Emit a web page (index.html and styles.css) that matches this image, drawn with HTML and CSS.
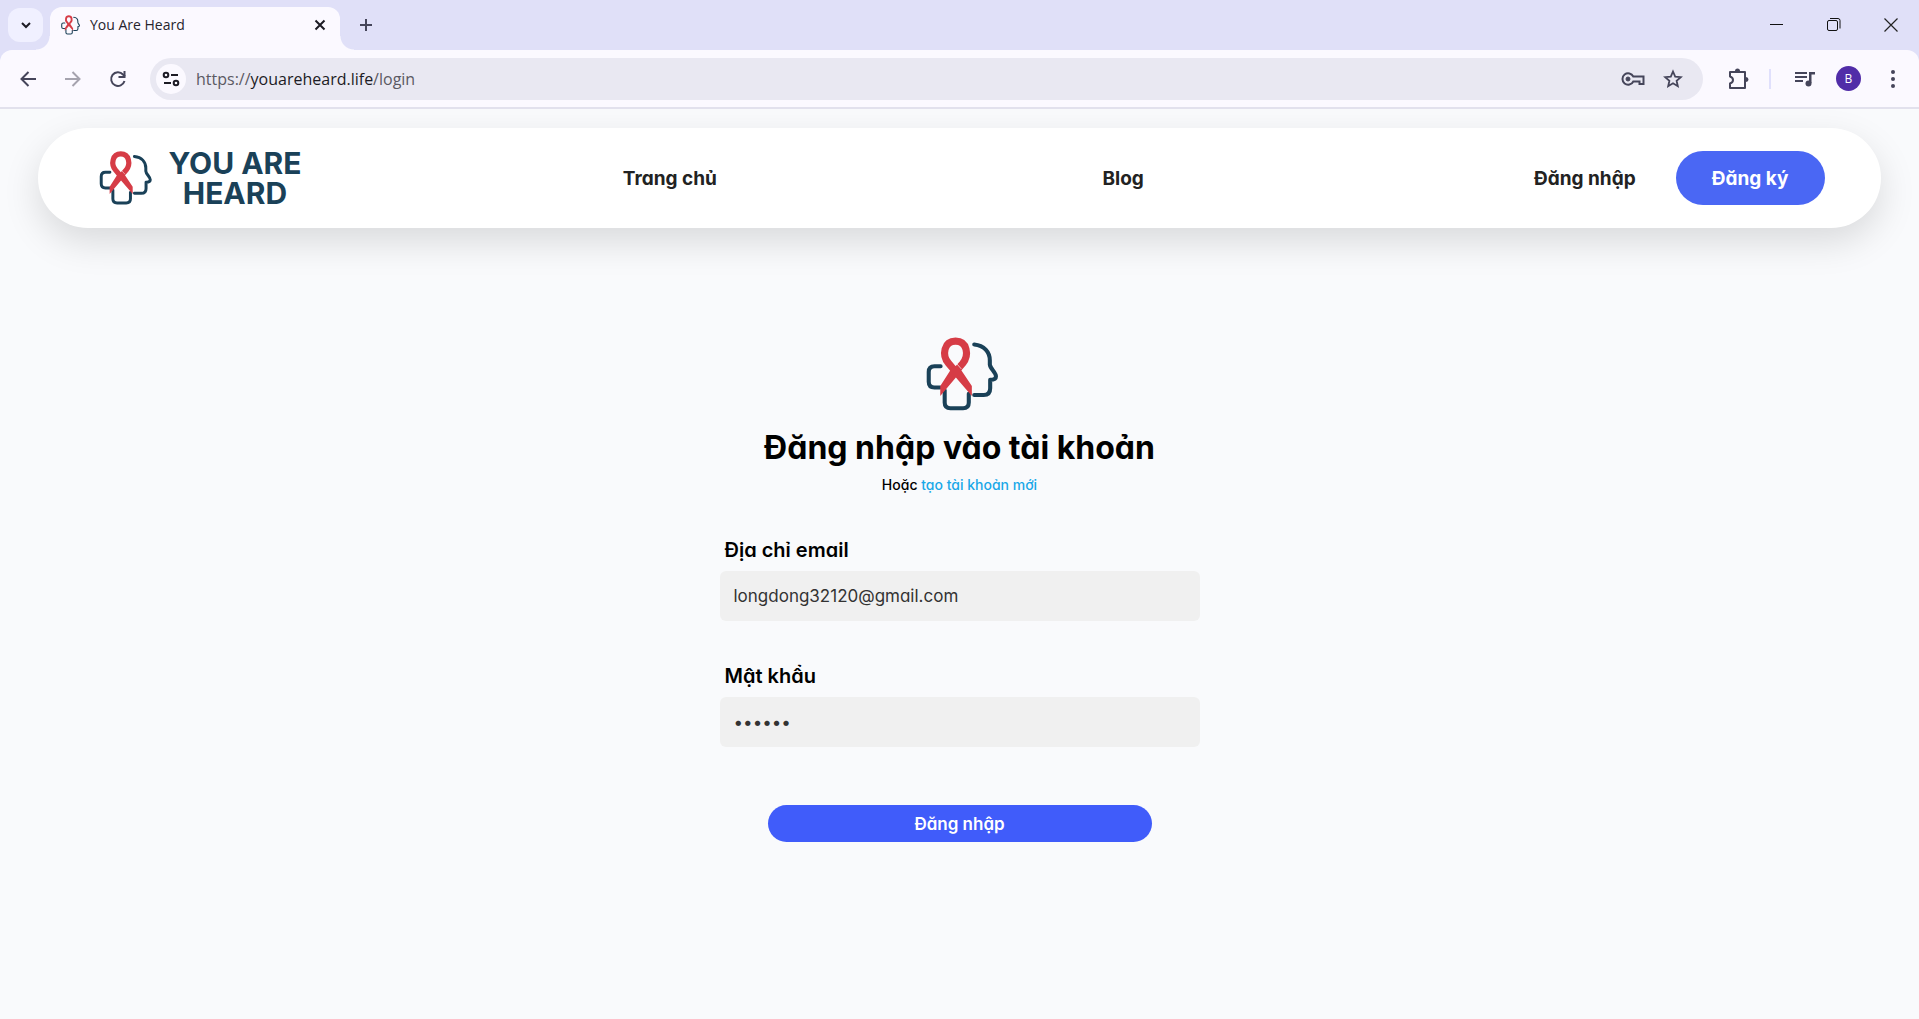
FILE: index.html
```html
<!DOCTYPE html>
<html lang="vi">
<head>
<meta charset="utf-8">
<meta name="viewport" content="width=device-width, initial-scale=1">
<title>You Are Heard</title>
<link rel="stylesheet" href="styles.css">
</head>
<body>
<svg class="defs" aria-hidden="true">
  <symbol id="brand" viewBox="78 55 212 218">
    <g fill="none" stroke="#1a4158" stroke-width="12" stroke-linecap="round" stroke-linejoin="round">
      <path d="M220 77C249 80 266 99 266 124V136C267 149 284 159 284 171C284 179 277 181 267 181V206C267 219 261 226 248 226H220"/>
      <path d="M121 141H103Q86 141 86 158V187Q86 204 103 204H120"/>
      <path d="M133 212V248Q133 265 150 265H187Q204 265 204 248V222"/>
    </g>
    <path d="M186 133C206 108 199 67 165 67C131 67 124 108 144 132L165 157L186 133" fill="none" stroke="#d63c46" stroke-width="21"/>
    <path d="M154 146L120 199V229L166 174L213 229V199L176 144Z" fill="#d63c46"/>
    <path class="brand-gap" d="M167 132L182 149" fill="none" stroke-width="2"/>
  </symbol>
</svg>

<div class="browser">
  <div class="tabstrip">
    <button class="tab-search" aria-label="Search tabs"><svg width="20" height="20" viewBox="0 0 20 20"><path d="M6 8l4 4 4-4" fill="none" stroke="#1c1b24" stroke-width="2"/></svg></button>
    <div class="tab">
      <svg class="favicon"><use href="#brand"/></svg>
      <span class="tab-title">You Are Heard</span>
      <button class="icon-btn" aria-label="Close tab"><svg width="12" height="12" viewBox="0 0 12 12"><path d="M1.500 1.500l9 9M10.500 1.500l-9 9" stroke="#1c1b24" stroke-width="2"/></svg></button>
    </div>
    <button class="icon-btn new-tab" aria-label="New tab"><svg width="14" height="14" viewBox="0 0 14 14"><path d="M7 1v12M1 7h12" stroke="#45455a" stroke-width="2"/></svg></button>
    <div class="window-controls">
      <button class="icon-btn" aria-label="Minimize"><svg width="14" height="14" viewBox="0 0 14 14"><path d="M0 6.500h13" stroke="#111"/></svg></button>
      <button class="icon-btn" aria-label="Restore"><svg width="14" height="14" viewBox="0 0 14 14" fill="none" stroke="#111"><rect x=".5" y="2.500" width="10" height="10" rx="1.500"/><path d="M3 .5h8q2 0 2 2v8"/></svg></button>
      <button class="icon-btn" aria-label="Close window"><svg width="14" height="14" viewBox="0 0 14 14"><path d="M.5 .5l13 13M13.500 .5l-13 13" stroke="#222" stroke-width="1.200"/></svg></button>
    </div>
  </div>
  <div class="toolbar">
    <button class="icon-btn" aria-label="Back"><svg width="18" height="18" viewBox="0 0 18 18" fill="none" stroke="#45455a" stroke-width="2"><path d="M17 9H3M9.500 2L2.500 9l7 7"/></svg></button>
    <button class="icon-btn" aria-label="Forward"><svg width="18" height="18" viewBox="0 0 18 18" fill="none" stroke="#a5a3ae" stroke-width="2"><path d="M1 9h14M8.500 2l7 7-7 7"/></svg></button>
    <button class="icon-btn" aria-label="Reload"><svg width="18" height="18" viewBox="0 0 18 18"><path d="M15.500 11A6.800 6.800 0 1 1 14 4.500L16 6.500" fill="none" stroke="#45455a" stroke-width="2"/><path d="M16.500 1v7h-7v-2h5V1z" fill="#45455a"/></svg></button>
    <div class="omnibox">
      <button class="site-info" aria-label="Site information"><svg width="18" height="16" viewBox="0 0 18 16" fill="none" stroke="#1c1b24" stroke-width="2"><circle cx="4" cy="4" r="2.300"/><path d="M9 4h7M2 12h7"/><circle cx="14" cy="12" r="2.300"/></svg></button>
      <div class="url" role="textbox" contenteditable="true" spellcheck="false" aria-label="Address"><span>https://</span><span class="url-host">youareheard.life</span><span>/login</span></div>
      <button class="icon-btn" aria-label="Passwords"><svg width="24" height="16" viewBox="0 0 24 16" fill="none" stroke="#45455a" stroke-width="2"><path d="M12.300 5.500H22.500V13H18.500V10.500H12.300A5.700 5.700 0 1 1 12.300 5.500Z"/><circle cx="7" cy="8" r="2" fill="#45455a" stroke-width="1"/></svg></button>
      <button class="icon-btn" aria-label="Bookmark"><svg width="20" height="20" viewBox="0 0 20 20"><path d="M10 2.500l2.200 5.100 5.600.5-4.200 3.700 1.200 5.400L10 14.300l-4.800 2.900 1.200-5.400L2.200 8.100l5.600-.5z" fill="none" stroke="#45455a" stroke-width="1.800"/></svg></button>
    </div>
    <button class="icon-btn" aria-label="Extensions"><svg width="22" height="22" viewBox="0 0 22 22"><path d="M3 4H18V20H3V15.500Q6 14.500 6 12T3 8.500Z" fill="none" stroke="#45455a" stroke-width="2" stroke-linejoin="round"/><path d="M8 3a2.500 2.500 0 0 1 5 0zM19 9a2.500 2.500 0 0 1 0 5z" fill="#45455a"/></svg></button>
    <span class="divider"></span>
    <button class="icon-btn" aria-label="Media controls"><svg width="20" height="16" viewBox="0 0 20 16"><path d="M0 2h12M0 6h12M0 10h8" stroke="#45455a" stroke-width="2"/><path d="M14 1h6v2.500h-3.500V12H14z" fill="#45455a"/><circle cx="13.500" cy="12.500" r="3" fill="#45455a"/></svg></button>
    <button class="avatar" aria-label="Profile">B</button>
    <button class="icon-btn" aria-label="Menu"><svg width="6" height="18" viewBox="0 0 6 18" fill="#45455a"><circle cx="3" cy="2" r="2"/><circle cx="3" cy="9" r="2"/><circle cx="3" cy="16" r="2"/></svg></button>
  </div>
</div>

<div class="page">
  <header class="site-header">
    <a class="logo" href="#"><svg class="logo-mark"><use href="#brand"/></svg><span class="logo-name"><span>YOU ARE</span><span>HEARD</span></span></a>
    <nav class="nav"><a href="#">Trang chủ</a><a href="#">Blog</a></nav>
    <div class="account"><a href="#">Đăng nhập</a><button class="register">Đăng ký</button></div>
  </header>
  <main class="login">
    <svg class="login-mark"><use href="#brand"/></svg>
    <h1>Đăng nhập vào tài khoản</h1>
    <p class="signup">Hoặc <a href="#">tạo tài khoản mới</a></p>
    <form class="form">
      <label for="email">Địa chỉ email</label>
      <input id="email" type="email" value="longdong32120@gmail.com">
      <label for="password">Mật khẩu</label>
      <input id="password" type="password" value="123456">
      <button class="submit" type="button">Đăng nhập</button>
    </form>
  </main>
</div>
</body>
</html>
```

FILE: styles.css
```css
* { box-sizing: border-box; }

body {
  margin: 0;
  min-height: 100vh;
  display: flex;
  flex-direction: column;
  background: #f9fafc;
  color: #000;
  font-family: Inter, "Noto Sans", sans-serif;
  font-feature-settings: "cv11";
}

a { color: inherit; text-decoration: none; }
button { border: 0; padding: 0; background: none; font: inherit; font-feature-settings: inherit; color: inherit; cursor: pointer; }
svg { display: block; flex: none; }
.defs { position: absolute; width: 0; height: 0; }
.brand-gap { stroke: #f9fafc; }

/* Browser window */
.browser {
  background: #e0e0f8;
  font-family: "Open Sans", "Noto Sans", sans-serif;
}
.icon-btn { display: flex; align-items: center; justify-content: center; flex: none; }

.tabstrip { display: flex; align-items: flex-start; height: 50px; padding: 7px 21px 0 8px; }
.tab-search {
  display: flex; align-items: center; justify-content: center;
  width: 35px; height: 34px; margin-top: 1px;
  border-radius: 12px; background: #f0f0ff;
}
.tab {
  position: relative;
  display: flex; align-items: center; gap: 10px;
  width: 290px; height: 43px; margin-left: 7px; padding: 0 14px 7px 11px;
  border-radius: 12px 12px 0 0; background: #fbf9ff;
}
.tab::before, .tab::after {
  content: "";
  position: absolute; bottom: 0; width: 14px; height: 14px;
}
.tab::before { left: -14px; background: radial-gradient(circle at 0 0, transparent 13px, #fbf9ff 14px); }
.tab::after { right: -14px; background: radial-gradient(circle at 100% 0, transparent 13px, #fbf9ff 14px); }
.favicon { width: 19px; height: 20px; }
.tab-title { flex: 1; font-size: 14px; line-height: 20px; color: #26252d; }
.new-tab { width: 32px; height: 36px; margin-left: 10px; }
.window-controls { display: flex; gap: 43px; height: 36px; margin-left: auto; }

.toolbar {
  display: flex; align-items: center;
  height: 59px; padding: 0 23px 0 19px;
  border-bottom: 2px solid #e2e1ed;
  border-radius: 12px 12px 0 0; background: #fbf9ff;
}
.toolbar > .icon-btn + .icon-btn { margin-left: 27px; }
.omnibox {
  display: flex; align-items: center; flex: 1; gap: 18px;
  height: 42px; margin: 0 24px 0 23px; padding: 0 20px 0 6px;
  border-radius: 21px; background: #e9e8f2;
}
.site-info {
  display: flex; align-items: center; justify-content: center;
  width: 30px; height: 30px; border-radius: 50%; background: #fbf9ff;
}
.url { flex: 1; margin-left: -8px; font-size: 16px; line-height: 24px; color: #5b5963; outline: 0; }
.url-host { color: #1c1b24; }
.divider { width: 2px; height: 20px; margin: 0 24px 0 20px; background: #e0e0fc; }
.avatar {
  width: 25px; height: 25px; margin: 0 29px 0 21px;
  border-radius: 50%; background: #512da8;
  color: #fff; font-size: 12px; line-height: 25px;
}

/* Site header */
.page { flex: 1; padding: 19px 2% 40px; }
.site-header {
  display: grid; grid-template-columns: 349fr 907fr 475fr; align-items: center;
  min-height: 100px; padding: 0 56px;
  border-radius: 50px; background: #fff;
  box-shadow: 0 14px 36px rgba(0, 0, 0, .13);
  color: #222; font-size: 19px; font-weight: 700;
}
.logo { display: flex; align-items: center; gap: 16px; padding-left: 5px; color: #1a4158; }
.logo-mark { width: 53px; height: 54px; }
.logo-name {
  display: flex; flex-direction: column; align-items: center;
  font-size: 30px; line-height: 30px; white-space: nowrap;
}
.nav { display: grid; grid-template-columns: 1fr 1fr; justify-items: center; }
.account { display: flex; align-items: center; justify-content: flex-end; gap: 40px; }
.register { width: 149px; height: 54px; border-radius: 27px; background: #4a67f4; color: #fff; }

/* Login form */
.login { display: flex; flex-direction: column; align-items: center; padding-top: 109px; }
.login-mark { width: 72px; height: 74px; margin-left: 4px; }
h1 { margin: 16px 0 0; font-size: 32px; line-height: 42px; font-weight: 700; }
.signup { margin: 6px 0 0; font-size: 14px; line-height: 20px; font-weight: 500; }
.signup a { color: #1aa8e8; }
.form { display: flex; flex-direction: column; width: 100%; max-width: 480px; margin-top: 42px; }
.form label { padding-left: 5px; margin-bottom: 8px; font-size: 20px; line-height: 26px; font-weight: 600; }
.form input {
  height: 50px; margin-bottom: 42px; padding: 0 14px;
  border: 0; border-radius: 6px; background: #f0f0f0; color: #333;
  font: 17px Inter, "Noto Sans", sans-serif; font-feature-settings: "cv11";
}
.submit {
  width: 80%; height: 37px; margin-top: 16px; align-self: center;
  border-radius: 19px; background: #405cfa; color: #fff; font-size: 17px; font-weight: 600;
}
```
